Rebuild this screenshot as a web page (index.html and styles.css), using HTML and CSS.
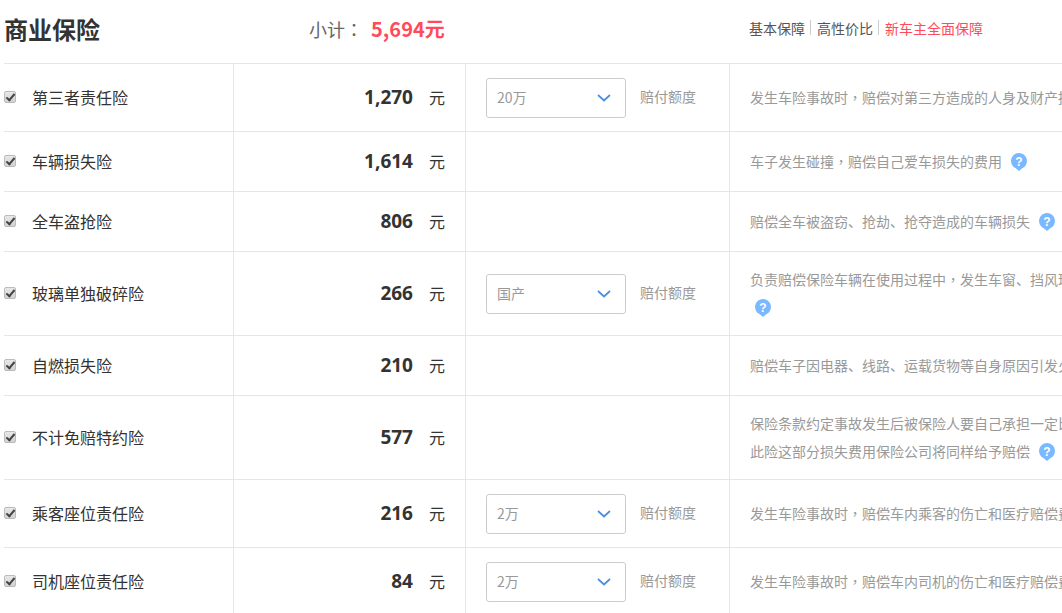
FILE: index.html
```html
<!DOCTYPE html>
<html lang="zh-CN">
<head>
    <meta charset="UTF-8">
    <title>商业保险</title>
    <link rel="stylesheet" href="styles.css">
</head>
<body>
    <div class="insure">
        <div class="insure-head">
            <h2>商业保险</h2>
            <div class="subtotal">小计<span class="pun" lang="zh-TW">：</span> <strong>5,694元</strong></div>
            <div class="plans">
                <span>基本保障</span><i></i><span>高性价比</span><i></i><span class="on">新车主全面保障</span>
            </div>
        </div>

        <div class="row row-select">
            <div class="c-name"><input type="checkbox" checked><span>第三者责任险</span></div>
            <div class="c-price"><b>1,270</b><span>元</span></div>
            <div class="c-opt">
                <div class="select"><span>20万</span><svg width="14" height="8" viewBox="0 0 14 8"><path d="M1 1 7 6.500 13 1" fill="none" stroke="#4a8fe0" stroke-width="1.700"/></svg></div>
                <span class="opt-label">赔付额度</span>
            </div>
            <div class="c-desc"><p><span>发生车险事故时<span class="pun" lang="zh-TW">，</span>赔偿对第三方造成的人身及财产损</span></p></div>
        </div>

        <div class="row">
            <div class="c-name"><input type="checkbox" checked><span>车辆损失险</span></div>
            <div class="c-price"><b>1,614</b><span>元</span></div>
            <div class="c-opt"></div>
            <div class="c-desc"><p><span>车子发生碰撞<span class="pun" lang="zh-TW">，</span>赔偿自己爱车损失的费用</span><svg class="help" width="16" height="18" viewBox="0 0 16 18"><path d="M8 0a8 8 0 0 1 3.200 15.300L8 18l-3.200-2.700A8 8 0 0 1 8 0z" fill="#7ab8ff"/><text x="8" y="12.500" text-anchor="middle" class="help-q">?</text></svg></p></div>
        </div>

        <div class="row">
            <div class="c-name"><input type="checkbox" checked><span>全车盗抢险</span></div>
            <div class="c-price"><b>806</b><span>元</span></div>
            <div class="c-opt"></div>
            <div class="c-desc"><p><span>赔偿全车被盗窃、抢劫、抢夺造成的车辆损失</span><svg class="help" width="16" height="18" viewBox="0 0 16 18"><path d="M8 0a8 8 0 0 1 3.200 15.300L8 18l-3.200-2.700A8 8 0 0 1 8 0z" fill="#7ab8ff"/><text x="8" y="12.500" text-anchor="middle" class="help-q">?</text></svg></p></div>
        </div>

        <div class="row row-tall">
            <div class="c-name"><input type="checkbox" checked><span>玻璃单独破碎险</span></div>
            <div class="c-price"><b>266</b><span>元</span></div>
            <div class="c-opt">
                <div class="select"><span>国产</span><svg width="14" height="8" viewBox="0 0 14 8"><path d="M1 1 7 6.500 13 1" fill="none" stroke="#4a8fe0" stroke-width="1.700"/></svg></div>
                <span class="opt-label">赔付额度</span>
            </div>
            <div class="c-desc">
                <p><span>负责赔偿保险车辆在使用过程中<span class="pun" lang="zh-TW">，</span>发生车窗、挡风玻</span></p>
                <p><svg class="help help-first" width="16" height="18" viewBox="0 0 16 18"><path d="M8 0a8 8 0 0 1 3.200 15.300L8 18l-3.200-2.700A8 8 0 0 1 8 0z" fill="#7ab8ff"/><text x="8" y="12.500" text-anchor="middle" class="help-q">?</text></svg></p>
            </div>
        </div>

        <div class="row">
            <div class="c-name"><input type="checkbox" checked><span>自燃损失险</span></div>
            <div class="c-price"><b>210</b><span>元</span></div>
            <div class="c-opt"></div>
            <div class="c-desc"><p><span>赔偿车子因电器、线路、运载货物等自身原因引发火</span></p></div>
        </div>

        <div class="row row-tall">
            <div class="c-name"><input type="checkbox" checked><span>不计免赔特约险</span></div>
            <div class="c-price"><b>577</b><span>元</span></div>
            <div class="c-opt"></div>
            <div class="c-desc">
                <p><span>保险条款约定事故发生后被保险人要自己承担一定比</span></p>
                <p><span>此险这部分损失费用保险公司将同样给予赔偿</span><svg class="help" width="16" height="18" viewBox="0 0 16 18"><path d="M8 0a8 8 0 0 1 3.200 15.300L8 18l-3.200-2.700A8 8 0 0 1 8 0z" fill="#7ab8ff"/><text x="8" y="12.500" text-anchor="middle" class="help-q">?</text></svg></p>
            </div>
        </div>

        <div class="row row-select">
            <div class="c-name"><input type="checkbox" checked><span>乘客座位责任险</span></div>
            <div class="c-price"><b>216</b><span>元</span></div>
            <div class="c-opt">
                <div class="select"><span>2万</span><svg width="14" height="8" viewBox="0 0 14 8"><path d="M1 1 7 6.500 13 1" fill="none" stroke="#4a8fe0" stroke-width="1.700"/></svg></div>
                <span class="opt-label">赔付额度</span>
            </div>
            <div class="c-desc"><p><span>发生车险事故时<span class="pun" lang="zh-TW">，</span>赔偿车内乘客的伤亡和医疗赔偿费</span></p></div>
        </div>

        <div class="row row-select">
            <div class="c-name"><input type="checkbox" checked><span>司机座位责任险</span></div>
            <div class="c-price"><b>84</b><span>元</span></div>
            <div class="c-opt">
                <div class="select"><span>2万</span><svg width="14" height="8" viewBox="0 0 14 8"><path d="M1 1 7 6.500 13 1" fill="none" stroke="#4a8fe0" stroke-width="1.700"/></svg></div>
                <span class="opt-label">赔付额度</span>
            </div>
            <div class="c-desc"><p><span>发生车险事故时<span class="pun" lang="zh-TW">，</span>赔偿车内司机的伤亡和医疗赔偿费</span></p></div>
        </div>
    </div>
</body>
</html>
```

FILE: styles.css
```css
html, body {
    margin: 0;
    height: 100%;
    overflow: hidden;
    background-color: #fff;
}

body {
    font-family: "Noto Sans CJK SC", "Open Sans", sans-serif;
    color: #333;
}

/* centred comma and colon */
.pun {
    font-family: "Noto Sans CJK TC", sans-serif;
}

.insure {
    margin-left: 4px;
    overflow: hidden;
}

.insure-head {
    display: flex;
    align-items: center;
    box-sizing: border-box;
    height: 63px;
    padding-bottom: 6px;
}

.insure-head h2 {
    flex: none;
    width: 305px;
    margin: 0;
    font-size: 24px;
    font-weight: 700;
    color: #333;
}

.subtotal {
    flex: none;
    width: 440px;
    font-size: 18px;
    color: #666;
}

.subtotal strong {
    margin-left: 4px;
    font-size: 20px;
    font-weight: 700;
    color: #ff4a5a;
}

.plans {
    display: flex;
    flex: none;
    align-items: center;
    margin-bottom: 2px;
    font-size: 14px;
    color: #555;
}

.plans i {
    width: 1px;
    height: 15px;
    margin: 0 6px 0 5px;
    background-color: #ccc;
}

.plans .on {
    color: #ff4a5a;
}

.row {
    display: flex;
    box-sizing: border-box;
    height: 60px;
    border-top: 1px solid #e6e6e6;
}

.row-select {
    height: 68px;
}

.row-tall {
    height: 84px;
}

.row > div {
    display: flex;
    flex: none;
    align-items: center;
    box-sizing: border-box;
}

.c-name {
    width: 230px;
    font-size: 16px;
    border-right: 1px solid #e6e6e6;
}

.c-name span {
    margin-bottom: 2px;
}

.c-name input {
    position: relative;
    width: 12px;
    height: 12px;
    margin: -2px 16px 0 0;
    appearance: none;
    border: 1px solid #bbb;
    border-radius: 2px;
    background: linear-gradient(#e8e8e8, #d2d2d2);
}

/* the tick over the grey box */
.c-name input::after {
    content: "";
    position: absolute;
    left: 3px;
    top: 0;
    width: 3px;
    height: 7px;
    border: solid #444;
    border-width: 0 2px 2px 0;
    transform: rotate(40deg);
}

.c-price {
    width: 232px;
    justify-content: flex-end;
    padding-right: 20px;
    border-right: 1px solid #e6e6e6;
    font-size: 16px;
}

.c-price span {
    margin-bottom: 2px;
}

.c-price b {
    margin: -1px 16px 0 0;
    font-family: "Open Sans", sans-serif;
    font-size: 19px;
    font-weight: 700;
}

.c-opt {
    width: 264px;
    padding-left: 20px;
    border-right: 1px solid #e6e6e6;
}

.select {
    display: flex;
    align-items: center;
    justify-content: space-between;
    box-sizing: border-box;
    width: 140px;
    height: 40px;
    padding: 0 14px 0 10px;
    border: 1px solid #ccc;
    border-radius: 3px;
    font-size: 14px;
    color: #999;
}

.select span {
    margin-bottom: 2px;
}

.opt-label {
    margin: 0 0 4px 14px;
    font-size: 14px;
    color: #999;
}

.row > .c-desc {
    flex: 1;
    flex-direction: column;
    align-items: flex-start;
    justify-content: center;
    min-width: 0;
    padding-left: 20px;
    font-size: 14px;
    color: #999;
}

.c-desc p {
    display: flex;
    align-items: center;
    height: 28px;
    margin: 0;
    white-space: nowrap;
}

.c-desc p > span {
    margin-bottom: 2px;
}

.help {
    flex: none;
    margin-left: 9px;
}

.help-first {
    margin-left: 5px;
}

.help-q {
    font-family: "Liberation Sans", sans-serif;
    font-size: 12px;
    font-weight: 700;
    fill: #fff;
}
```
